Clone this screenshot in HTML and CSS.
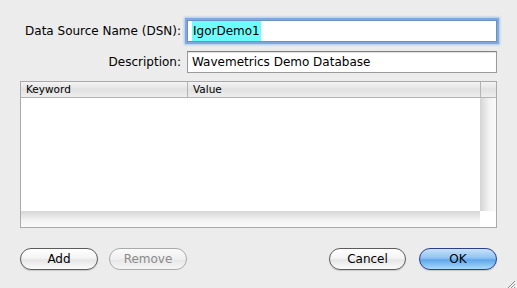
FILE: index.html
```html
<!DOCTYPE html>
<html>
    <head>
        <meta charset="UTF-8">
        <link rel="stylesheet" href="styles.css">
    </head>
    <body>
        <div class="dialog">
            <div class="fields">
                <label class="fieldLabel">Data Source Name (DSN):</label>
                <div class="textField focused"><span class="selected">IgorDemo1</span></div>
                <label class="fieldLabel">Description:</label>
                <div class="textField">Wavemetrics Demo Database</div>
            </div>

            <div class="table">
                <div class="tableHead">
                    <div class="colKeyword">Keyword</div>
                    <div class="colValue">Value</div>
                    <div class="colCorner"></div>
                </div>
                <div class="tableBody">
                    <div class="rows"></div>
                    <div class="vScroll"></div>
                </div>
                <div class="tableFoot">
                    <div class="hScroll"></div>
                    <div class="scrollCorner"></div>
                </div>
            </div>

            <div class="buttonRow">
                <button class="pill">Add</button>
                <button class="pill disabled">Remove</button>
                <div class="spacer"></div>
                <button class="pill cancel">Cancel</button>
                <button class="pill default">OK</button>
            </div>
        </div>
        <div class="grip">
            <svg width="12" height="12" viewBox="0 0 12 12">
                <path d="M11 3 L3 11 M11 6 L6 11 M11 9 L9 11" stroke="#8c8c8c" stroke-width="1"/>
                <path d="M12 4 L4 12 M12 7 L7 12 M12 10 L10 12" stroke="#ffffff" stroke-width="1"/>
            </svg>
        </div>
    </body>
</html>
```

FILE: styles.css
```css
body {
    margin: 0;
    width: 517px;
    height: 288px;
    background-color: #ececec;
    font-family: "DejaVu Sans", Verdana, sans-serif;
    position: relative;
    overflow: hidden;
}

.dialog {
    padding: 20px 20px 0 20px;
}

.fields {
    display: grid;
    grid-template-columns: 161px 1fr;
    column-gap: 6px;
    row-gap: 9px;
    align-items: center;
}

.fieldLabel {
    text-align: right;
    font-size: 12px;
    color: #000;
}

.textField {
    height: 20px;
    line-height: 20px;
    border: 1px solid #9a9a9a;
    border-top-color: #7f7f7f;
    background-color: #fff;
    font-size: 12px;
    padding-left: 4px;
    box-shadow: inset 0 1px 1px rgba(0, 0, 0, 0.12);
}

.textField.focused {
    border-color: #6a8fc0;
    box-shadow: 0 0 0 2px #7ea9de, 0 0 2px 3px #a9c8ee;
}

.selected {
    background-color: #6cfcfc;
    padding: 3px 1px 3px 1px;
}

.table {
    margin-top: 8px;
    height: 145px;
    border: 1px solid #aaaaaa;
    background-color: #fff;
    display: flex;
    flex-direction: column;
}

.tableHead {
    display: flex;
    height: 15px;
    border-bottom: 1px solid #b4b4b4;
    background: linear-gradient(#f4f4f4, #e2e2e2 50%, #eeeeee);
    font-size: 10.5px;
    line-height: 15px;
}

.colKeyword {
    width: 161px;
    padding-left: 5px;
    border-right: 1px solid #b4b4b4;
}

.colValue {
    flex: 1;
    padding-left: 5px;
    border-right: 1px solid #b4b4b4;
}

.colCorner {
    width: 15px;
}

.tableBody {
    flex: 1;
    display: flex;
}

.rows {
    flex: 1;
}

.vScroll {
    width: 16px;
    background: linear-gradient(to right, #d4d4d4, #f2f2f2 55%, #fafafa);
}

.tableFoot {
    display: flex;
    height: 16px;
}

.hScroll {
    flex: 1;
    background: linear-gradient(#d6d6d6, #f2f2f2 55%, #fafafa);
}

.scrollCorner {
    width: 16px;
    background-color: #fff;
}

.buttonRow {
    display: flex;
    margin-top: 20px;
    gap: 11px;
}

.spacer {
    flex: 1;
}

.pill {
    height: 22px;
    width: 78px;
    border: 1px solid #5c5c5c;
    border-radius: 11px;
    background: linear-gradient(#ffffff, #f4f4f4 45%, #e6e6e6 55%, #fbfbfb);
    font-family: "DejaVu Sans", Verdana, sans-serif;
    font-size: 12px;
    color: #000;
    padding: 0;
    box-shadow: 0 1px 1px rgba(0, 0, 0, 0.15);
}

.pill.cancel {
    width: 77px;
    margin-right: 2px;
}

.pill.disabled {
    color: #8a8a8a;
    border-color: #aaaaaa;
    background: linear-gradient(#fafafa, #f0f0f0 50%, #e8e8e8 55%, #f6f6f6);
    box-shadow: none;
}

.pill.default {
    border-color: #2b3f8c;
    background: linear-gradient(#c8e2fb, #8fc3f2 45%, #5fa6ea 55%, #a9dcfb);
}

.grip {
    position: absolute;
    right: 1px;
    bottom: 1px;
    width: 12px;
    height: 12px;
}
```
